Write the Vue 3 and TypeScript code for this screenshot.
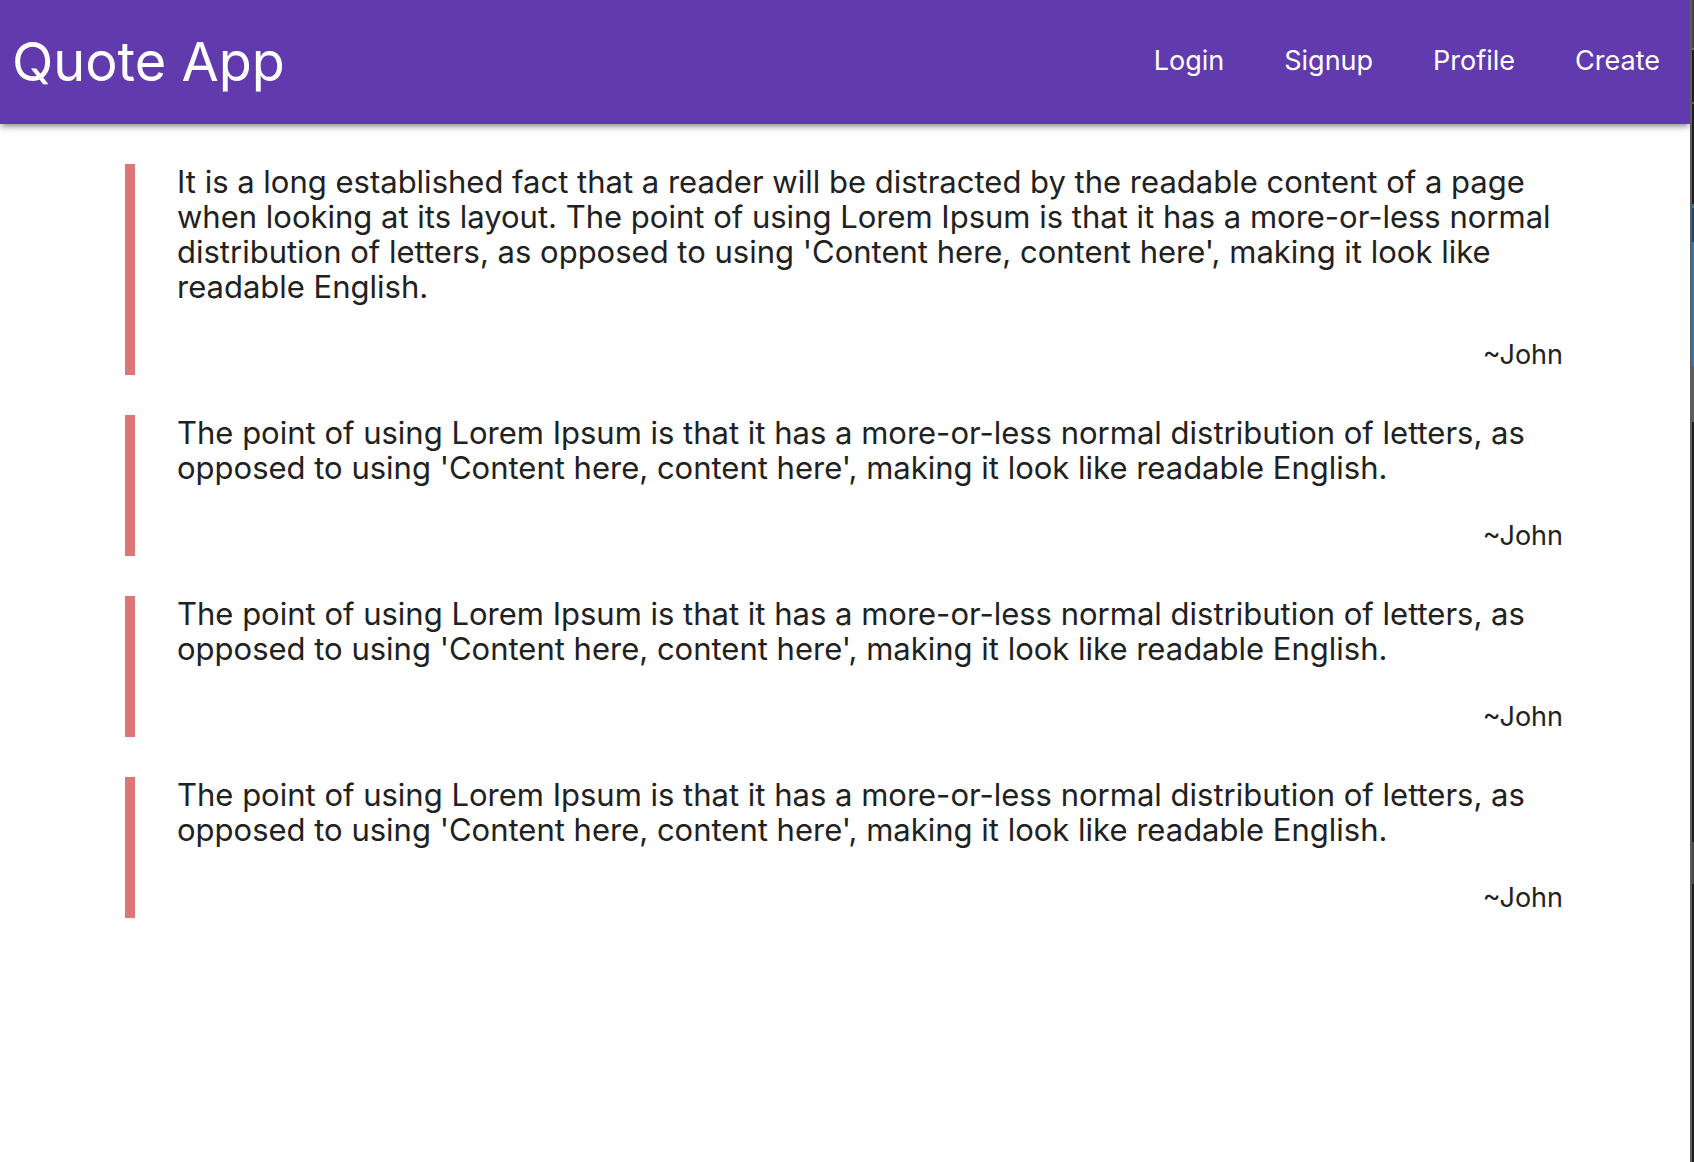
<script setup lang="ts">
interface Quote {
  id: number
  text: string
  author: string
}

const links: string[] = ['Login', 'Signup', 'Profile', 'Create']

const shortText =
  "The point of using Lorem Ipsum is that it has a more-or-less normal distribution of letters, as opposed to using 'Content here, content here', making it look like readable English."

const quotes: Quote[] = [
  {
    id: 1,
    text:
      'It is a long established fact that a reader will be distracted by the readable content of a page when looking at its layout. ' +
      "The point of using Lorem Ipsum is that it has a more-or-less normal distribution of letters, as opposed to using 'Content here, content here', making it look like readable English.",
    author: 'John',
  },
  { id: 2, text: shortText, author: 'John' },
  { id: 3, text: shortText, author: 'John' },
  { id: 4, text: shortText, author: 'John' },
]
</script>

<template>
  <div class="window">
    <div class="page">
      <header class="navbar">
        <a class="brand" href="#">Quote App</a>
        <nav class="links">
          <a v-for="link in links" :key="link" class="link" href="#">{{ link }}</a>
        </nav>
      </header>
      <main class="quotes">
        <blockquote v-for="quote in quotes" :key="quote.id" class="quote">
          <p class="text">{{ quote.text }}</p>
          <p class="author">~{{ quote.author }}</p>
        </blockquote>
      </main>
    </div>
    <div class="edge"></div>
  </div>
</template>

<style>
body {
  margin: 0;
  background: #fff;
}
</style>

<style scoped>
.window {
  display: flex;
  min-height: 100vh;
  font-family: Inter, 'Liberation Sans', sans-serif;
  color: #212121;
}

.page {
  flex: 1;
  min-width: 0;
  overflow: hidden;
}

.navbar {
  display: flex;
  align-items: flex-start;
  justify-content: space-between;
  height: 124px;
  padding-left: 12px;
  background: #613bae;
  box-shadow:
    0 4px 4px 0 rgba(0, 0, 0, 0.14),
    0 6px 2px -4px rgba(0, 0, 0, 0.12),
    0 2px 10px 0 rgba(0, 0, 0, 0.2);
}

.brand,
.link {
  color: #fff;
  text-decoration: none;
}

.brand {
  font-size: 54px;
  line-height: 124px;
}

.links {
  display: flex;
}

.link {
  padding: 0 30px;
  font-size: 27px;
  line-height: 122px;
}

.quotes {
  display: flex;
  flex-direction: column;
  gap: 40px;
  padding: 40px 127px 40px 125px;
}

.quote {
  margin: 0;
  padding-left: 42px;
  border-left: 10px solid #de7577;
}

.text,
.author {
  margin: 0;
}

.text {
  font-size: 31px;
  line-height: 35px;
}

.author {
  margin-top: 30px;
  font-size: 27px;
  line-height: 41px;
  text-align: right;
}

.edge {
  flex: none;
  box-sizing: border-box;
  width: 4px;
  border-left: 2px solid #5c5c5c;
  background: linear-gradient(
    #424242 48px,
    #686868 48px 50px,
    #1e1e1e 50px 102px,
    #5c5c5c 102px 104px,
    #1f1f1f 104px 204px,
    #5c5c5c 204px 206px,
    #3878b0 206px 208px,
    #1d4568 208px 242px,
    #3377b0 242px 366px,
    #5c5c5c 366px 422px,
    #1e1e1e 422px 842px,
    #474747 842px 884px,
    #1e1e1e 884px
  );
}
</style>
